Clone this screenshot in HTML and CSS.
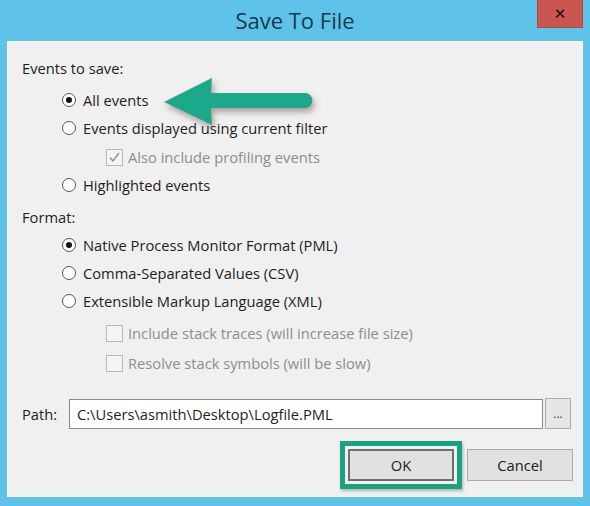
FILE: index.html
```html
<!DOCTYPE html>
<html>
<head>
<meta charset="utf-8">
<link rel="stylesheet" href="styles.css">
</head>
<body>
<div class="window">
  <div class="titlebar">
    <span></span>
    <span class="title">Save To File</span>
    <span class="close">&#x2715;</span>
  </div>
  <div class="client">
    <div class="row label">Events to save:</div>
    <div class="row radio-row r-first"><span class="radio on"></span><span>All events</span></div>
    <div class="row radio-row"><span class="radio"></span><span>Events displayed using current filter</span></div>
    <div class="row check-row r-check1 disabled"><span class="check checked"><svg viewBox="0 0 15 15" width="15" height="15"><path d="M3 7.5 L6 11 L12 3" fill="none" stroke="#9a9a9a" stroke-width="1.6"/></svg></span><span>Also include profiling events</span></div>
    <div class="row radio-row"><span class="radio"></span><span>Highlighted events</span></div>
    <div class="row label r-format">Format:</div>
    <div class="row radio-row"><span class="radio on"></span><span>Native Process Monitor Format (PML)</span></div>
    <div class="row radio-row"><span class="radio"></span><span>Comma-Separated Values (CSV)</span></div>
    <div class="row radio-row"><span class="radio"></span><span>Extensible Markup Language (XML)</span></div>
    <div class="row check-row r-check2 disabled"><span class="check"></span><span>Include stack traces (will increase file size)</span></div>
    <div class="row check-row r-check3 disabled"><span class="check"></span><span>Resolve stack symbols (will be slow)</span></div>
    <div class="path-row">
      <span class="path-label">Path:</span>
      <div class="path-input">C:\Users\asmith\Desktop\Logfile.PML</div>
      <div class="browse">...</div>
    </div>
    <div class="button-row">
      <div class="highlight"><div class="btn default">OK</div></div>
      <div class="btn cancel">Cancel</div>
    </div>
  </div>
</div>
<svg class="arrow" width="590" height="506" viewBox="0 0 590 506">
  <defs>
    <filter id="sh" x="-20%" y="-30%" width="140%" height="170%">
      <feDropShadow dx="2" dy="4" stdDeviation="3" flood-color="#6a4a4a" flood-opacity="0.5"/>
    </filter>
  </defs>
  <path d="M164 102 L212 78 L211 93 L305 93 A7.5 7.5 0 0 1 305 108 L211 108 L212 125 Z" fill="#1fa88a" filter="url(#sh)"/>
</svg>
</body>
</html>
```
FILE: styles.css
```css
html, body {
  margin: 0;
  padding: 0;
}
body {
  width: 590px;
  height: 506px;
  background: #5fc3e9;
  font-family: "Open Sans", "Noto Sans", sans-serif;
  overflow: hidden;
  position: relative;
}
.window {
  display: flex;
  flex-direction: column;
  height: 506px;
}
.titlebar {
  height: 41px;
  display: grid;
  grid-template-columns: 1fr auto 1fr;
  align-items: start;
}
.title {
  font-size: 22px;
  color: #17394c;
  line-height: 40px;
}
.close {
  justify-self: end;
  width: 46px;
  height: 28px;
  margin-right: 7px;
  background: #c9574f;
  border: 1px solid #b04a43;
  border-top: none;
  box-sizing: border-box;
  color: #111;
  font-weight: bold;
  font-size: 15px;
  font-family: "DejaVu Sans", sans-serif;
  display: flex;
  align-items: center;
  justify-content: center;
}
.client {
  margin: 0 7px 9px 7px;
  flex: 1;
  background: #f0f0f0;
  border: 1px solid #fbfbfb;
  box-sizing: border-box;
  padding-top: 12px;
  display: flex;
  flex-direction: column;
  font-size: 14.7px;
  color: #1e1e1e;
}
.row {
  height: 28px;
  display: flex;
  align-items: center;
  white-space: nowrap;
}
.label {
  padding-left: 14px;
}
.radio-row {
  padding-left: 54px;
}
.r-first { margin-top: 4px; }
.r-check1 { margin-top: 1px; }
.r-format { margin-top: 4px; }
.r-check2 { margin-top: 4px; }
.r-check3 { margin-top: 2px; }
.check-row {
  padding-left: 98px;
}
.disabled {
  color: #8d8d8d;
}
.radio {
  width: 14px;
  height: 14px;
  border: 1px solid #555;
  border-radius: 50%;
  background: #fff;
  box-sizing: border-box;
  margin-right: 7px;
  display: flex;
  align-items: center;
  justify-content: center;
}
.radio.on::after {
  content: "";
  width: 6px;
  height: 6px;
  border-radius: 50%;
  background: #111;
}
.check {
  width: 17px;
  height: 17px;
  border: 1px solid #b8b8b8;
  background: #f4f4f4;
  box-sizing: border-box;
  margin-right: 5px;
  display: flex;
  align-items: center;
  justify-content: center;
}
.path-row {
  margin-top: 21px;
  display: flex;
  align-items: center;
  padding-left: 14px;
}
.path-label {
  width: 47px;
}
.path-input {
  width: 474px;
  height: 30px;
  background: #fff;
  border: 1px solid #8a8a8a;
  box-sizing: border-box;
  padding-left: 7px;
  display: flex;
  align-items: center;
  white-space: nowrap;
}
.browse {
  margin-left: 2px;
  width: 26px;
  height: 31px;
  background: #e6e6e6;
  border: 1px solid #acacac;
  box-sizing: border-box;
  display: flex;
  align-items: flex-end;
  justify-content: center;
  padding-bottom: 6px;
  font-size: 12px;
  color: #333;
}
.button-row {
  margin-top: 12px;
  display: flex;
  align-items: center;
  justify-content: flex-end;
  padding-right: 9px;
}
.highlight {
  border: 5px solid #17a382;
  padding: 3px;
  box-shadow: 1px 2px 3px rgba(0,0,0,0.25);
  margin-right: 5px;
}
.btn {
  width: 106px;
  height: 32px;
  background: #e1e1e1;
  border: 1px solid #adadad;
  box-sizing: border-box;
  display: flex;
  align-items: center;
  justify-content: center;
  color: #222;
}
.btn.default {
  border: 2px solid #6e6e6e;
}
.arrow {
  position: absolute;
  left: 0;
  top: 0;
  pointer-events: none;
}
```
